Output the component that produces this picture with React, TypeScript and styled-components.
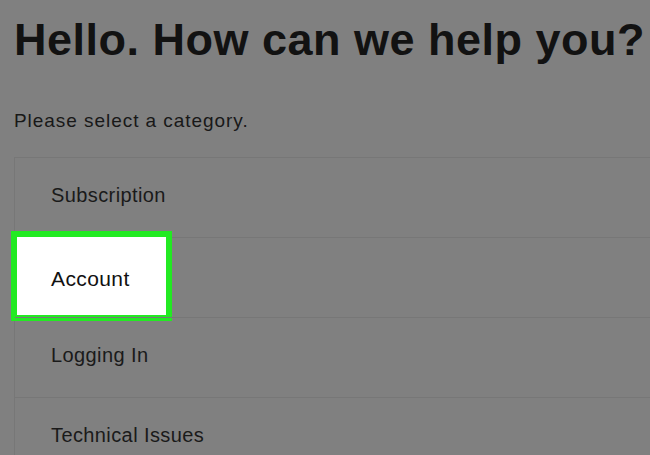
import styled, { createGlobalStyle } from "styled-components";

const GlobalStyle = createGlobalStyle`
  html, body {
    margin: 0;
    padding: 0;
    background: #808080;
    overflow: hidden;
  }
  body {
    font-family: "Liberation Sans", Arial, sans-serif;
  }
`;

const Page = styled.main`
  padding: 17px 0 0 14px;
  height: 455px;
  box-sizing: border-box;
  overflow: hidden;
`;

const Title = styled.h1`
  margin: 0;
  font-size: 45px;
  line-height: 45px;
  font-weight: 700;
  letter-spacing: 0.5px;
  color: #121212;
  white-space: nowrap;
`;

const Lead = styled.p`
  margin: 49px 0 0;
  font-size: 19px;
  line-height: 19px;
  letter-spacing: 0.95px;
  color: #181818;
`;

const List = styled.ul`
  list-style: none;
  margin: 27px 0 0;
  padding: 0;
  border-left: 1px solid #777777;
`;

const Row = styled.li`
  position: relative;
  display: flex;
  align-items: center;
  height: 80px;
  box-sizing: border-box;
  padding: 0 0 6px 36px;
  border-top: 1px solid #777777;
  font-size: 20px;
  line-height: 20px;
  letter-spacing: 0.4px;
  color: #1a1a1a;
`;

const Highlight = styled.div`
  position: absolute;
  top: -7px;
  left: -4px;
  width: 161px;
  height: 90px;
  box-sizing: border-box;
  display: flex;
  align-items: center;
  padding: 6px 0 0 34px;
  background: #ffffff;
  border: 6px solid #22ea22;
  font-size: 21px;
  color: #111111;
`;

const categories = ["Subscription", "Account", "Logging In", "Technical Issues"];

export default function App() {
  return (
    <>
      <GlobalStyle />
      <Page>
        <Title>Hello. How can we help you?</Title>
        <Lead>Please select a category.</Lead>
        <List>
          {categories.map((c) =>
            c === "Account" ? (
              <Row key={c}>
                <Highlight>{c}</Highlight>
              </Row>
            ) : (
              <Row key={c}>{c}</Row>
            )
          )}
        </List>
      </Page>
    </>
  );
}
